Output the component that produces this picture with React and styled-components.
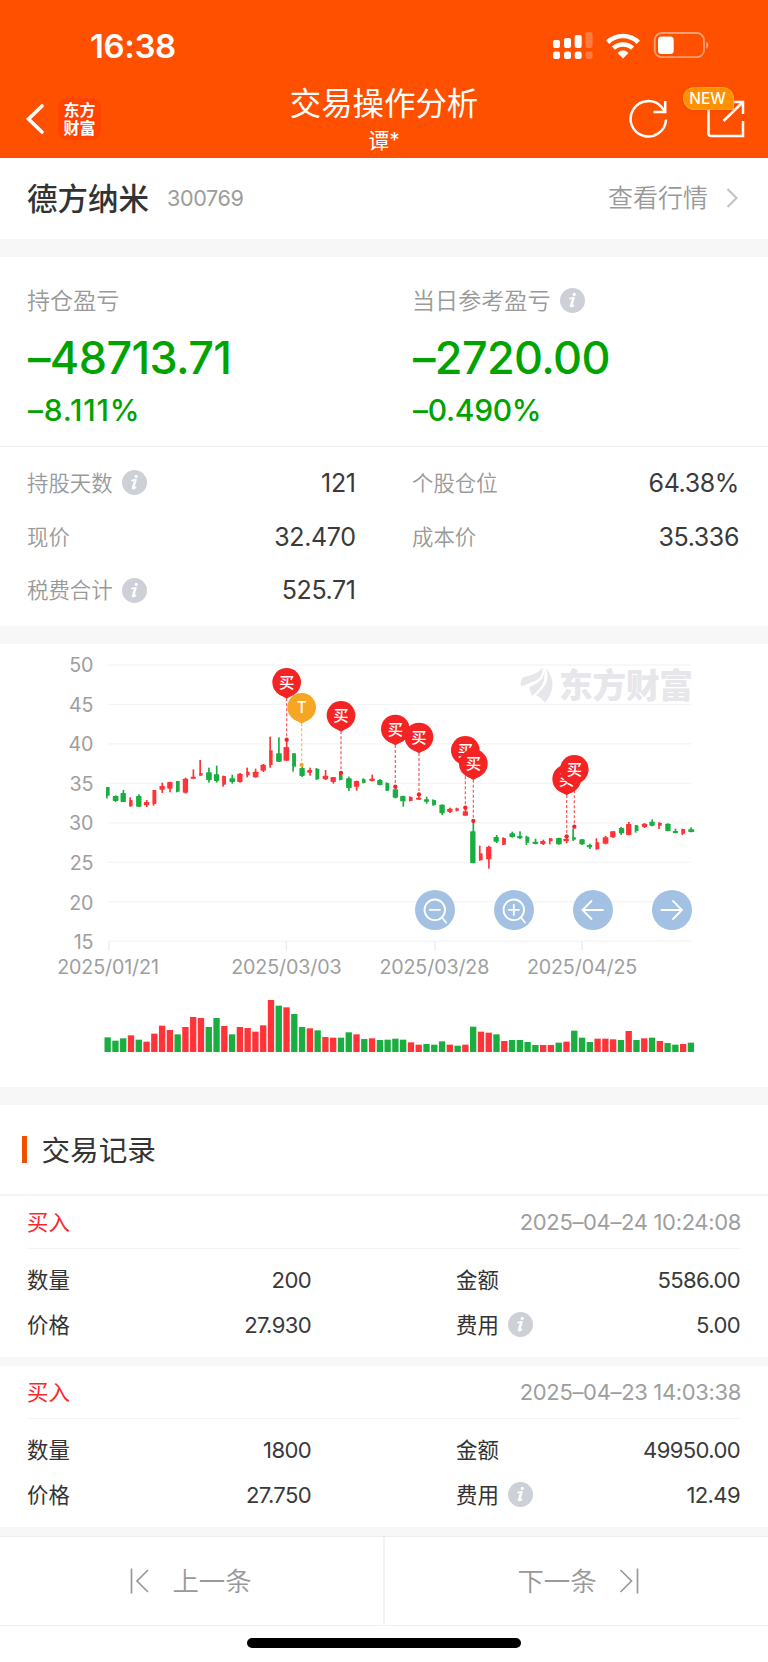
import React from "react";
import styled, { createGlobalStyle, css } from "styled-components";

const RED = "#ff3338";
const GREEN = "#19ae3f";

// one entry per trading day, in chart units (3 per pixel):
// [color, high, body top, body bottom, low, body left, body right, volume, volume color]
const days = [
  ["g", 441, 441, 467, 475, -5, 6, 44],
  ["g", 466, 468, 483, 486, -8, 9, 34],
  ["g", 450, 459, 486, 486, -8, 8, 41],
  ["r", 472, 480, 499, 500, -5, 5, 50],
  ["g", 463, 468, 500, 501, -8, 8, 37],
  ["r", 480, 486, 496, 501, -8, 8, 31],
  ["r", 450, 450, 492, 497, -5, 6, 55],
  ["r", 428, 438, 449, 459, -8, 8, 79],
  ["r", 425, 426, 446, 457, -8, 8, 66],
  ["g", 423, 423, 455, 457, -5, 6, 53],
  ["r", 413, 416, 458, 461, -8, 8, 75],
  ["r", 388, 410, 416, 416, -8, 8, 105],
  ["r", 360, 399, 407, 407, -5, 5, 102],
  ["g", 383, 397, 420, 428, -8, 9, 75],
  ["g", 377, 403, 423, 428, -8, 8, 102],
  ["r", 407, 408, 434, 440, -6, 5, 78],
  ["g", 404, 415, 426, 431, -8, 9, 53],
  ["r", 399, 401, 426, 428, -8, 8, 75],
  ["r", 383, 395, 406, 412, -4, 6, 72],
  ["r", 386, 395, 412, 413, -8, 9, 61],
  ["r", 372, 374, 392, 396, -8, 8, 80],
  ["r", 290, 331, 375, 383, -5, 5, 156],
  ["g", 292, 340, 365, 366, -8, 9, 139],
  ["r", 300, 321, 362, 362, -9, 8, 134],
  ["g", 339, 340, 380, 395, -6, 5, 114],
  ["g", 376, 384, 408, 411, -8, 8, 75],
  ["r", 383, 390, 398, 407, -8, 7, 71],
  ["g", 384, 386, 418, 420, -6, 5, 65],
  ["r", 390, 407, 418, 420, -8, 8, 45],
  ["r", 411, 411, 426, 431, -8, 8, 43],
  ["g", 400, 405, 420, 421, -6, 5, 43],
  ["g", 410, 415, 444, 453, -8, 9, 59],
  ["r", 422, 423, 440, 452, -8, 8, 53],
  ["g", 415, 417, 429, 430, -6, 4, 39],
  ["r", 404, 416, 423, 424, -8, 8, 41],
  ["g", 417, 420, 435, 436, -8, 8, 36],
  ["g", 427, 429, 452, 453, -6, 5, 37],
  ["g", 440, 448, 473, 475, -8, 8, 40],
  ["g", 467, 468, 484, 500, -9, 7, 37],
  ["r", 469, 471, 483, 484, -6, 5, 29],
  ["r", 463, 473, 479, 479, -8, 8, 22],
  ["g", 470, 478, 485, 491, -8, 8, 24],
  ["g", 478, 480, 496, 497, -6, 5, 22],
  ["g", 493, 494, 520, 525, -8, 8, 32],
  ["r", 503, 506, 516, 519, -8, 8, 22],
  ["r", 503, 505, 512, 514, -6, 4, 19, "g"],
  ["r", 500, 514, 527, 527, -8, 8, 22],
  ["g", 543, 574, 669, 670, -9, 7, 76],
  ["r", 617, 640, 661, 662, -6, 5, 61],
  ["r", 617, 620, 658, 686, -8, 8, 58],
  ["g", 585, 591, 605, 609, -9, 7, 53],
  ["r", 592, 594, 614, 615, -6, 5, 33],
  ["g", 575, 580, 591, 593, -8, 9, 36],
  ["g", 574, 588, 595, 597, -8, 8, 36],
  ["g", 587, 590, 608, 615, -6, 5, 30],
  ["g", 596, 605, 612, 613, -8, 8, 21],
  ["r", 599, 603, 612, 615, -9, 7, 21],
  ["r", 594, 595, 604, 613, -6, 5, 21],
  ["g", 593, 594, 613, 614, -8, 9, 28],
  ["r", 586, 596, 604, 610, -9, 7, 31],
  ["g", 566, 592, 599, 603, -6, 5, 64],
  ["g", 597, 598, 613, 615, -8, 8, 43],
  ["g", 611, 615, 622, 627, -9, 7, 30],
  ["r", 595, 607, 628, 629, -6, 5, 40],
  ["r", 588, 592, 611, 613, -8, 9, 40],
  ["r", 573, 574, 592, 594, -9, 7, 38],
  ["g", 561, 564, 580, 585, -6, 10, 36],
  ["r", 546, 552, 585, 586, -8, 8, 63],
  ["g", 555, 556, 573, 578, -5, 6, 36],
  ["r", 549, 551, 561, 564, -7, 9, 41],
  ["g", 538, 545, 557, 559, -8, 8, 43],
  ["r", 547, 548, 557, 567, -5, 6, 33],
  ["g", 550, 551, 573, 574, -7, 9, 27],
  ["g", 566, 573, 579, 580, -8, 8, 22],
  ["r", 566, 567, 581, 585, -5, 6, 24],
  ["g", 562, 568, 576, 577, -8, 10, 28],
];

const pins = [
  { x: 860, y: 127, end: 299, label: "买" },
  { x: 905, y: 202, end: 375, label: "T" },
  { x: 1023, y: 226, end: 399, label: "买" },
  { x: 1186, y: 267, end: 440, label: "买" },
  { x: 1257, y: 291, end: 463, label: "买" },
  { x: 1396, y: 331, end: 503, label: "买" },
  { x: 1420, y: 371, end: 543, label: "买" },
  { x: 1700, y: 417, end: 589, label: "买" },
  { x: 1723, y: 388, end: 560, label: "买" },
];

const dates = [
  { x: 324, label: "2025/01/21", tick: 327 },
  { x: 859, label: "2025/03/03", tick: 859 },
  { x: 1303, label: "2025/03/28", tick: 1305 },
  { x: 1746, label: "2025/04/25", tick: 1746 },
];

const records = [
  { time: "2025–04–24 10:24:08", count: "200", amount: "5586.00", price: "27.930", fee: "5.00" },
  { time: "2025–04–23 14:03:38", count: "1800", amount: "49950.00", price: "27.750", fee: "12.49" },
];

const dayX = (i) => 323 + i * 23.33;

const Info = () => (
  <InfoIcon viewBox="0 0 25 25">
    <circle cx="12.5" cy="12.5" r="12.5" fill="#cdd0d6" />
    <circle cx="14.2" cy="6.4" r="1.6" fill="#fff" />
    <path
      d="M9.8 10.4 L14 9.7 L11.7 17.6 Q11.4 18.9 12.2 18.5 L13.7 17.4"
      fill="none"
      stroke="#fff"
      strokeWidth="1.5"
      strokeLinejoin="round"
      strokeLinecap="round"
    />
    <path d="M13 10.6 L10.9 18.3" stroke="#fff" strokeWidth="2.2" strokeLinecap="round" />
  </InfoIcon>
);

const Pin = ({ x, y, end, label }) => {
  const color = label === "T" ? "#f6a623" : "#f42424";
  return (
    <g>
      <line x1={x} x2={x} y1={y + 48} y2={end} stroke={color} strokeWidth="3.6" strokeDasharray="9 6" opacity="0.75" />
      <circle cx={x} cy={end} r="6.5" fill={color} />
      <circle cx={x} cy={y} r="43" fill={color} />
      <path d={`M${x - 27} ${y + 33} L${x} ${y + 49} L${x + 27} ${y + 33} Z`} fill={color} />
      <PinText x={x} y={y + 17}>
        {label}
      </PinText>
    </g>
  );
};

const Chart = () => (
  <ChartSvg viewBox="0 12 2304 1329">
    {[50, 45, 40, 35, 30, 25, 20, 15].map((value, i) => (
      <g key={value}>
        <rect x="324" y={73 + i * 118.4} width="1750" height="4" fill="#f5f5f6" />
        <AxisText x="280" y={97 + i * 118.6} textAnchor="end">
          {value}
        </AxisText>
      </g>
    ))}
    {dates.map((date) => (
      <g key={date.label}>
        <rect x={date.tick - 2} y="904" width="4" height="28" fill="#ececee" />
        <AxisText x={date.x} y="1001" textAnchor="middle">
          {date.label}
        </AxisText>
      </g>
    ))}

    <g fill="#e6e6eb">
      <path d="M1564 122 Q1562 134 1567 138 C1590 129 1610 120 1623 98 Q1628 90 1628 83 C1615 101 1588 104 1564 122 Z" />
      <path d="M1562 132 C1562 118 1566 112 1580 109 C1600 105 1618 100 1627 84 C1630 116 1607 124 1585 130 Q1570 134 1564 139 Z" />
      <path d="M1630 83 C1638 115 1620 126 1588 141 Q1590 157 1597 168 C1618 147 1643 128 1630 83 Z" />
      <path d="M1637 85 C1654 125 1629 145 1608 166 Q1620 171 1635 188 C1661 158 1668 118 1637 85 Z" />
      <Watermark x="1677" y="173" textLength="402">
        东方财富
      </Watermark>
    </g>

    {days.map(([color, high, top, bottom, low, left, right, volume, volumeColor], i) => {
      const x = dayX(i);
      const narrow = right - left < 12;
      return (
        <g key={i} fill={color === "r" ? RED : GREEN}>
          <rect x={x + (narrow ? left : -2)} y={high} width="5" height={low - high} />
          <rect x={x + left} y={top} width={right - left} height={bottom - top} rx="2" />
          <rect
            x={x - 9.5}
            y={1236 - volume}
            width="19"
            height={volume}
            fill={(volumeColor || color) === "r" ? RED : GREEN}
          />
        </g>
      );
    })}
    {pins.map((pin) => (
      <Pin key={pin.x} {...pin} />
    ))}
  </ChartSvg>
);

const App = () => {
  return (
    <>
      <GlobalStyle />
      <Page>
        <Header>
          <StatusBar>
            <Time>16:38</Time>
            <StatusIcons viewBox="0 0 160 30">
              <g fill="#fff">
                <rect x="1" y="10" width="7" height="8" rx="2" />
                <rect x="12" y="8" width="7" height="10" rx="2" />
                <rect x="22.7" y="5" width="7" height="13" rx="2" />
                <rect x="1" y="21.5" width="7" height="7.5" rx="2.2" />
                <rect x="12" y="21.5" width="7" height="7.5" rx="2.2" />
                <rect x="22.7" y="21.5" width="7" height="7.5" rx="2.2" />
                <rect x="33.5" y="2" width="7" height="16" rx="2" opacity="0.25" />
                <rect x="33.5" y="21.5" width="7" height="7.5" rx="2.2" opacity="0.25" />
                <path d="M65.5 23 Q71 17.7 76.5 23 L71 28.5 Z" />
                <rect x="106" y="6.5" width="15.7" height="17.5" rx="3.5" />
                <path d="M154.3 11.5 Q158.6 15.2 154.3 19 Z" opacity="0.5" />
              </g>
              <path d="M55.7 12.2 A22 22 0 0 1 86.3 12.2" fill="none" stroke="#fff" strokeWidth="4.7" />
              <path d="M61.4 18.2 A14 14 0 0 1 80.6 18.2" fill="none" stroke="#fff" strokeWidth="4.5" />
              <rect x="102.7" y="3" width="49.3" height="24.2" rx="7" fill="none" stroke="#fff" strokeWidth="1.8" opacity="0.45" />
            </StatusIcons>
          </StatusBar>
          <NavBar>
            <NavLeft>
              <BackIcon viewBox="0 0 20 32">
                <path d="M17 3 L3.5 16 L17 29" />
              </BackIcon>
              <Brand>
                <span>东方</span>
                <span>财富</span>
              </Brand>
            </NavLeft>
            <NavTitle>
              <h1>交易操作分析</h1>
              <p>谭*</p>
            </NavTitle>
            <NavRight>
              <RefreshIcon viewBox="0 0 40 40">
                <path d="M38 20.5 A17.7 17.7 0 1 1 33.4 7.9 L37 12.5" />
                <path d="M37.2 2 V13 H25.5" />
              </RefreshIcon>
              <ShareWrap>
                <ShareIcon viewBox="0 0 40 40">
                  <path d="M2.5 3 V34.5 Q2.5 37 5 37 H37 V22" />
                  <path d="M17.5 22 L36.5 3.5" />
                  <path d="M24 3 H37 V15" />
                </ShareIcon>
                <NewBadge>NEW</NewBadge>
              </ShareWrap>
            </NavRight>
          </NavBar>
        </Header>

        <StockBar>
          <StockName>德方纳米</StockName>
          <StockCode>300769</StockCode>
          <QuoteLink>
            <Label>查看行情</Label>
            <Chevron viewBox="0 0 12 20">
              <path d="M1.5 1 L10.5 10 L1.5 19" />
            </Chevron>
          </QuoteLink>
        </StockBar>
        <Gap />

        <Summary>
          <div>
            <SummaryLabel>
              <Label>持仓盈亏</Label>
            </SummaryLabel>
            <BigNumber>–48713.71</BigNumber>
            <Percent $spacing="0.8px">–8.111%</Percent>
          </div>
          <div>
            <SummaryLabel>
              <Label>当日参考盈亏</Label>
              <Info />
            </SummaryLabel>
            <BigNumber>–2720.00</BigNumber>
            <Percent $spacing="-0.3px">–0.490%</Percent>
          </div>
        </Summary>
        <Stats>
          <Stat>
            <Label>持股天数</Label>
            <Info />
            <strong>121</strong>
          </Stat>
          <Stat>
            <Label>个股仓位</Label>
            <strong>64.38%</strong>
          </Stat>
          <Stat>
            <Label>现价</Label>
            <strong>32.470</strong>
          </Stat>
          <Stat>
            <Label>成本价</Label>
            <strong>35.336</strong>
          </Stat>
          <Stat>
            <Label>税费合计</Label>
            <Info />
            <strong>525.71</strong>
          </Stat>
        </Stats>
        <Gap />

        <ChartSection>
          <Chart />
          <Controls>
            <ControlButton>
              <svg viewBox="0 0 40 40">
                <circle cx="19.8" cy="19.8" r="10.3" />
                <path d="M14.7 19.8 H25 M27 27.5 L31 32.5" />
              </svg>
            </ControlButton>
            <ControlButton>
              <svg viewBox="0 0 40 40">
                <circle cx="19.8" cy="19.8" r="10.3" />
                <path d="M14.7 19.8 H25 M19.8 14.7 V25 M27 27.5 L31 32.5" />
              </svg>
            </ControlButton>
            <ControlButton>
              <svg viewBox="0 0 40 40">
                <path d="M30 20 H9.5 M18.5 11 L9.5 20 L18.5 29" />
              </svg>
            </ControlButton>
            <ControlButton>
              <svg viewBox="0 0 40 40">
                <path d="M9.5 20 H30 M21 11 L30 20 L21 29" />
              </svg>
            </ControlButton>
          </Controls>
        </ChartSection>
        <Gap />

        <RecordsTitle>
          <Label>交易记录</Label>
        </RecordsTitle>
        {records.map((record) => (
          <Record key={record.time}>
            <RecordHead>
              <Side>买入</Side>
              <RecordTime>{record.time}</RecordTime>
            </RecordHead>
            <RecordGrid>
              <Label>数量</Label>
              <Value>{record.count}</Value>
              <FeeLabel>
                <Label>金额</Label>
              </FeeLabel>
              <Value>{record.amount}</Value>
              <Label>价格</Label>
              <Value>{record.price}</Value>
              <FeeLabel>
                <Label>费用</Label>
                <Info />
              </FeeLabel>
              <Value>{record.fee}</Value>
            </RecordGrid>
          </Record>
        ))}

        <BottomBar>
          <PageButton>
            <StepIcon viewBox="0 0 20 26">
              <path d="M1.5 0.5 V25.5 M18 2 L7 13 L18 24" />
            </StepIcon>
            <Label>上一条</Label>
          </PageButton>
          <PageButton $next>
            <Label>下一条</Label>
            <StepIcon viewBox="0 0 20 26">
              <path d="M18.5 0.5 V25.5 M1.5 2 L12.5 13 L1.5 24" />
            </StepIcon>
          </PageButton>
        </BottomBar>
        <HomeArea>
          <HomeIndicator />
        </HomeArea>
      </Page>
    </>
  );
};

const GlobalStyle = createGlobalStyle`
  * {
    box-sizing: border-box;
  }
  body {
    margin: 0;
    background: #fff;
    color: #333;
    font-family: Inter, "Noto Sans CJK SC", sans-serif;
  }
  h1, h2, p {
    margin: 0;
    font-weight: 400;
  }
`;

const Page = styled.div`
  width: 768px;
  height: 1662px;
  overflow: hidden;
  display: flex;
  flex-direction: column;

  > * {
    flex-shrink: 0;
  }
`;

// lifts chinese text so it centers against the digits and icons
const Label = styled.span`
  padding-bottom: 3px;
`;

const Header = styled.header`
  height: 158px;
  background: #ff5000;
  color: #fff;
`;

const StatusBar = styled.div`
  height: 84px;
  padding: 0 56px 0 90px;
  display: flex;
  justify-content: space-between;
`;

const Time = styled.span`
  margin-top: 26px;
  font-size: 33px;
  line-height: 40px;
  font-weight: 600;
  letter-spacing: -0.4px;
`;

const StatusIcons = styled.svg`
  width: 160px;
  height: 30px;
  margin-top: 30px;
`;

const NavBar = styled.div`
  height: 74px;
  display: grid;
  grid-template-columns: 1fr 260px 1fr;
`;

const NavLeft = styled.div`
  display: flex;
  align-items: flex-start;
  padding: 14px 0 0 25px;
`;

const BackIcon = styled.svg`
  width: 20px;
  height: 32px;
  margin-top: 5px;
  fill: none;
  stroke: #fff;
  stroke-width: 3.6;
  stroke-linecap: round;
`;

const Brand = styled.div`
  width: 43px;
  height: 42px;
  margin-left: 13px;
  padding-top: 3px;
  border-radius: 9px;
  background: #ff4300;
  display: flex;
  flex-direction: column;
  align-items: center;
  font-size: 16px;
  line-height: 18px;
  font-weight: 700;
`;

const NavTitle = styled.div`
  text-align: center;

  h1 {
    margin-top: 1px;
    font-size: 31.4px;
    line-height: 38px;
  }
  p {
    font-size: 21px;
    line-height: 26px;
    margin-top: 5px;
  }
`;

const NavRight = styled.div`
  display: flex;
  justify-content: flex-end;
  align-items: flex-start;
  gap: 38px;
  padding: 15px 22px 0 0;
`;

const lineIcon = css`
  width: 40px;
  height: 40px;
  fill: none;
  stroke: #fff;
  stroke-width: 2.5;
`;

const RefreshIcon = styled.svg`
  ${lineIcon}
`;

const ShareIcon = styled.svg`
  ${lineIcon}
  display: block;
`;

const ShareWrap = styled.div`
  position: relative;
`;

const NewBadge = styled.span`
  position: absolute;
  left: -23px;
  top: -12px;
  width: 51px;
  height: 23px;
  padding-right: 2px;
  border-radius: 12px 12px 1px 12px;
  border: 1px solid #ffa02d;
  background: #ff9000;
  font-size: 15.5px;
  line-height: 22px;
  font-weight: 500;
  text-align: center;
  box-shadow: 0 1px 4px rgba(200, 60, 0, 0.3);
`;

const StockBar = styled.div`
  height: 81px;
  padding: 0 30px 2px 27px;
  display: flex;
  align-items: center;
`;

const StockName = styled.h2`
  padding-bottom: 1px;
  font-size: 30.5px;
  font-weight: 500;
`;

const StockCode = styled.span`
  margin-left: 18px;
  font-size: 21.6px;
  color: #9c9c9c;
  letter-spacing: -0.4px;
`;

const QuoteLink = styled.div`
  margin-left: auto;
  display: flex;
  align-items: center;
  font-size: 25px;
  font-weight: 350;
  color: #999;
`;

const Chevron = styled.svg`
  width: 12px;
  height: 20px;
  margin-left: 18px;
  fill: none;
  stroke: #c4c4c6;
  stroke-width: 2.2;
`;

const Gap = styled.div`
  height: 18px;
  background: #f7f7f8;
`;

const Summary = styled.div`
  height: 190px;
  padding-left: 27px;
  display: grid;
  grid-template-columns: 385px 1fr;
  border-bottom: 1px solid #f1f1f2;
`;

const InfoIcon = styled.svg`
  width: 25px;
  height: 25px;
  margin-left: 9.5px;
`;

const SummaryLabel = styled.div`
  margin-top: 28px;
  height: 31px;
  display: flex;
  align-items: center;
  font-size: 23.1px;
  font-weight: 350;
  color: #999;
`;

const BigNumber = styled.div`
  margin-top: 15px;
  padding-left: 1px;
  font-size: 45px;
  line-height: 54px;
  font-weight: 500;
  color: #00a300;
  letter-spacing: -0.65px;
`;

const Percent = styled.div`
  margin-top: 7px;
  padding-left: 1px;
  font-size: 30px;
  line-height: 36px;
  font-weight: 500;
  color: #00a300;
  letter-spacing: ${({ $spacing }) => $spacing};
`;

const Stats = styled.div`
  height: 179px;
  padding: 9px 29px 0 27px;
  display: grid;
  grid-template-columns: 328.5px 327px;
  column-gap: 56.5px;
  grid-auto-rows: 53.8px;
`;

const Stat = styled.div`
  display: flex;
  align-items: center;
  font-size: 21.4px;
  font-weight: 350;
  color: #999;

  strong {
    margin-left: auto;
    font-size: 25px;
    font-weight: 400;
    color: #3a3a3a;
    letter-spacing: -0.4px;
  }
`;

const ChartSection = styled.div`
  position: relative;
  height: 443px;
`;

const ChartSvg = styled.svg`
  display: block;
  width: 768px;
  height: 443px;
`;

const AxisText = styled.text`
  font-size: 59px;
  font-weight: 400;
  fill: #9e9e9e;
  letter-spacing: -0.4px;
`;

const Watermark = styled.text`
  font-size: 101px;
  font-weight: 900;
`;

const PinText = styled.text`
  font-size: 46px;
  font-weight: 500;
  fill: #fff;
  text-anchor: middle;
`;

const Controls = styled.div`
  position: absolute;
  left: 415px;
  top: 246px;
  width: 277px;
  display: flex;
  justify-content: space-between;
`;

const ControlButton = styled.button`
  width: 40px;
  height: 40px;
  padding: 0;
  border: 0;
  border-radius: 50%;
  background: rgba(153, 186, 224, 0.9);

  svg {
    display: block;
    fill: none;
    stroke: #fff;
    stroke-width: 1.8;
    stroke-linecap: round;
  }
`;

const RecordsTitle = styled.h2`
  height: 91px;
  padding-left: 22px;
  display: flex;
  align-items: center;
  font-size: 28.6px;
  border-bottom: 2px solid #f5f5f6;

  &::before {
    content: "";
    width: 5px;
    height: 27px;
    margin-right: 14.5px;
    background: #f05000;
  }
`;

const Record = styled.div`
  height: 170px;
  border-bottom: 9px solid #f7f7f8;
`;

const RecordHead = styled.div`
  height: 53px;
  margin: 0 27px;
  display: flex;
  align-items: center;
  justify-content: space-between;
  border-bottom: 1px solid #f3f3f4;
`;

const Side = styled.span`
  padding-bottom: 4px;
  font-size: 21.4px;
  color: #f8282c;
`;

const RecordTime = styled.span`
  padding-bottom: 1px;
  font-size: 22px;
  color: #9e9e9e;
  letter-spacing: -0.35px;
`;

const RecordGrid = styled.div`
  padding: 8px 28px 0 27px;
  display: grid;
  grid-template-columns: 100px 184px 1fr 140px;
  grid-auto-rows: 45px;
  align-items: center;
  font-size: 21.4px;
`;

const FeeLabel = styled.span`
  display: flex;
  align-items: center;
  padding-left: 145px;
`;

const Value = styled.span`
  font-size: 22.1px;
  color: #3a3a3a;
  text-align: right;
  letter-spacing: -0.65px;
`;

const BottomBar = styled.div`
  height: 90px;
  display: grid;
  grid-template-columns: 1fr 1fr;
  border-top: 1px solid #ececed;
  border-bottom: 1px solid #f1f1f2;
`;

const PageButton = styled.div`
  display: flex;
  align-items: center;
  justify-content: center;
  gap: 22px;
  font-size: 26.4px;
  font-weight: 350;
  color: #999;
  padding-right: ${({ $next }) => ($next ? "0" : "1px")};
  padding-left: ${({ $next }) => ($next ? "3px" : "0")};
  border-right: ${({ $next }) => ($next ? "0" : "1px solid #f3f3f4")};
  border-left: ${({ $next }) => ($next ? "1px solid #f3f3f4" : "0")};
`;

const StepIcon = styled.svg`
  width: 20px;
  height: 26px;
  fill: none;
  stroke: #999;
  stroke-width: 1.7;
`;

const HomeArea = styled.div`
  height: 36px;
  padding-top: 12px;
`;

const HomeIndicator = styled.div`
  width: 274px;
  height: 9.5px;
  margin: 0 auto;
  border-radius: 5px;
  background: #000;
`;

export default App;
